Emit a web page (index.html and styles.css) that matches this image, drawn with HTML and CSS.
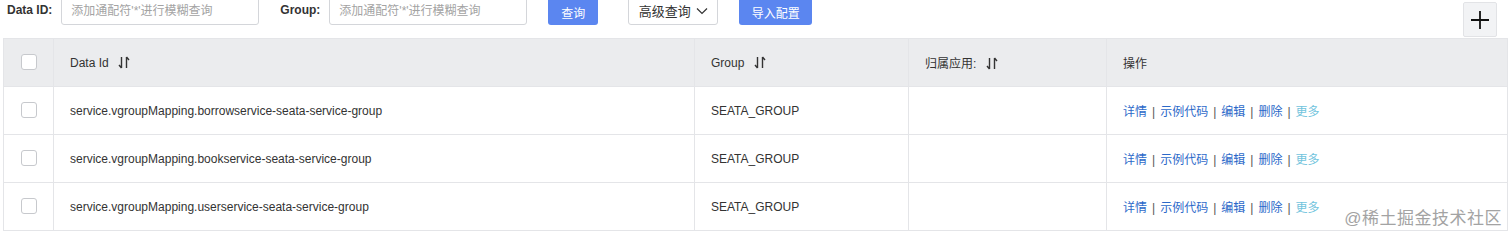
FILE: index.html
```html
<!DOCTYPE html>
<html lang="en">
<head>
<meta charset="utf-8">
<title>配置列表</title>
<link rel="stylesheet" href="styles.css">
</head>
<body>

<div class="toolbar">
  <label class="field-label">Data ID:</label>
  <input class="search-input" type="text" placeholder="添加通配符'*'进行模糊查询">
  <label class="field-label group-label">Group:</label>
  <input class="search-input" type="text" placeholder="添加通配符'*'进行模糊查询">
  <button class="btn btn-primary btn-query">查询</button>
  <button class="btn btn-normal btn-advanced">高级查询
    <svg class="chevron" width="12" height="8" viewBox="0 0 12 8"><path d="M1 1.5 L6 6.5 L11 1.5" fill="none" stroke="#333" stroke-width="1.2"/></svg>
  </button>
  <button class="btn btn-primary btn-import">导入配置</button>
  <button class="btn-add">
    <svg width="20" height="20" viewBox="0 0 20 20"><path d="M10 1 V19 M1 10 H19" stroke="#111" stroke-width="1.8"/></svg>
  </button>
</div>

<div class="table-wrap">
  <table class="config-table">
    <colgroup>
      <col class="col-check">
      <col class="col-id">
      <col class="col-group">
      <col class="col-app">
      <col class="col-ops">
    </colgroup>
    <thead>
      <tr>
        <th><span class="checkbox"></span></th>
        <th>Data Id <span class="sort"><svg width="12" height="13" viewBox="0 0 12 13"><path d="M3.5 1 V12 M3.5 12 L1 9" fill="none" stroke="#333" stroke-width="1.4"/><path d="M8.5 12 V1 M8.5 1 L11 4" fill="none" stroke="#333" stroke-width="1.4"/></svg></span></th>
        <th>Group <span class="sort"><svg width="12" height="13" viewBox="0 0 12 13"><path d="M3.5 1 V12 M3.5 12 L1 9" fill="none" stroke="#333" stroke-width="1.4"/><path d="M8.5 12 V1 M8.5 1 L11 4" fill="none" stroke="#333" stroke-width="1.4"/></svg></span></th>
        <th>归属应用: <span class="sort"><svg width="12" height="13" viewBox="0 0 12 13"><path d="M3.5 1 V12 M3.5 12 L1 9" fill="none" stroke="#333" stroke-width="1.4"/><path d="M8.5 12 V1 M8.5 1 L11 4" fill="none" stroke="#333" stroke-width="1.4"/></svg></span></th>
        <th>操作</th>
      </tr>
    </thead>
    <tbody>
      <tr>
        <td><span class="checkbox"></span></td>
        <td>service.vgroupMapping.borrowservice-seata-service-group</td>
        <td>SEATA_GROUP</td>
        <td></td>
        <td class="ops"><a>详情</a><span class="sep">|</span><a>示例代码</a><span class="sep">|</span><a>编辑</a><span class="sep">|</span><a>删除</a><span class="sep">|</span><a class="more">更多</a></td>
      </tr>
      <tr>
        <td><span class="checkbox"></span></td>
        <td>service.vgroupMapping.bookservice-seata-service-group</td>
        <td>SEATA_GROUP</td>
        <td></td>
        <td class="ops"><a>详情</a><span class="sep">|</span><a>示例代码</a><span class="sep">|</span><a>编辑</a><span class="sep">|</span><a>删除</a><span class="sep">|</span><a class="more">更多</a></td>
      </tr>
      <tr>
        <td><span class="checkbox"></span></td>
        <td>service.vgroupMapping.userservice-seata-service-group</td>
        <td>SEATA_GROUP</td>
        <td></td>
        <td class="ops"><a>详情</a><span class="sep">|</span><a>示例代码</a><span class="sep">|</span><a>编辑</a><span class="sep">|</span><a>删除</a><span class="sep">|</span><a class="more">更多</a></td>
      </tr>
    </tbody>
  </table>
  <div class="watermark">@稀土掘金技术社区</div>
</div>

</body>
</html>
```

FILE: styles.css
```css
body {
  margin: 0;
  font-family: "Liberation Sans", "Noto Sans CJK SC", sans-serif;
  font-size: 12px;
  color: #333;
  background: #fff;
}

.toolbar {
  display: flex;
  align-items: flex-start;
  height: 42px;
  margin-top: -4px;
  padding-left: 7px;
}
.field-label {
  font-weight: bold;
  font-size: 12px;
  color: #333;
  line-height: 29px;
  margin-right: 9px;
}
.group-label {
  margin-left: 21px;
}
.search-input {
  box-sizing: border-box;
  width: 198px;
  height: 29px;
  border: 1px solid #d4d6da;
  border-radius: 3px;
  padding: 0 9px;
  font-family: inherit;
  font-size: 12px;
  color: #333;
  outline: none;
}
.search-input::placeholder {
  color: #a3a3a3;
}
.btn {
  box-sizing: border-box;
  height: 29px;
  border-radius: 3px;
  font-family: inherit;
  font-size: 12px;
  padding: 0 12px;
  cursor: pointer;
}
.btn-primary {
  background: #5b86f0;
  border: none;
  color: #fff;
}
.btn-normal {
  background: #fff;
  border: 1px solid #d4d6da;
  color: #333;
  font-size: 13px;
}
.btn-query {
  width: 50px;
  margin-left: 21px;
  padding: 4px 0 0;
}
.btn-advanced {
  width: 90px;
  margin-left: 30px;
  display: flex;
  align-items: center;
  justify-content: center;
  gap: 5px;
  padding: 0;
}
.chevron {
  margin-top: 1px;
}
.btn-import {
  width: 73px;
  margin-left: 21px;
  padding: 4px 0 0;
}
.btn-add {
  box-sizing: border-box;
  width: 34px;
  height: 35px;
  margin-left: auto;
  margin-right: 15px;
  margin-top: 6px;
  background: #f2f3f5;
  border: 1px solid #e2e3e6;
  border-radius: 2px;
  display: flex;
  align-items: center;
  justify-content: center;
  padding: 0;
}

.table-wrap {
  position: relative;
  margin-left: 3px;
  width: 1505px;
}
.config-table {
  width: 100%;
  border-collapse: collapse;
  table-layout: fixed;
}
.col-check { width: 50px; }
.col-id { width: 641px; }
.col-group { width: 214px; }
.col-app { width: 198px; }
.config-table th,
.config-table td {
  border: 1px solid #e4e5e8;
  height: 47px;
  padding: 0 0 0 16px;
  text-align: left;
  font-weight: normal;
  font-size: 12px;
  color: #333;
  white-space: nowrap;
}
.config-table th {
  background: #ebecee;
}
.config-table th:first-child,
.config-table td:first-child {
  padding: 0;
  text-align: center;
}
.checkbox {
  display: inline-block;
  box-sizing: border-box;
  width: 16px;
  height: 16px;
  border: 1px solid #c7c9cd;
  border-radius: 3px;
  background: #fff;
  vertical-align: middle;
  margin-top: -3px;
}
.sort {
  display: inline-block;
  margin-left: 6px;
  vertical-align: middle;
}
.sort svg {
  display: block;
  margin-top: -2px;
}
.ops a {
  color: #2c69c9;
}
.ops a.more {
  color: #72c4dd;
}
.sep {
  color: #555;
  margin: 0 5px;
}
.watermark {
  position: absolute;
  right: 6px;
  bottom: 2px;
  font-size: 17px;
  color: #a3a3a3;
  letter-spacing: 0.5px;
  text-shadow: 0 0 3px #fff, 0 0 3px #fff;
}
```
